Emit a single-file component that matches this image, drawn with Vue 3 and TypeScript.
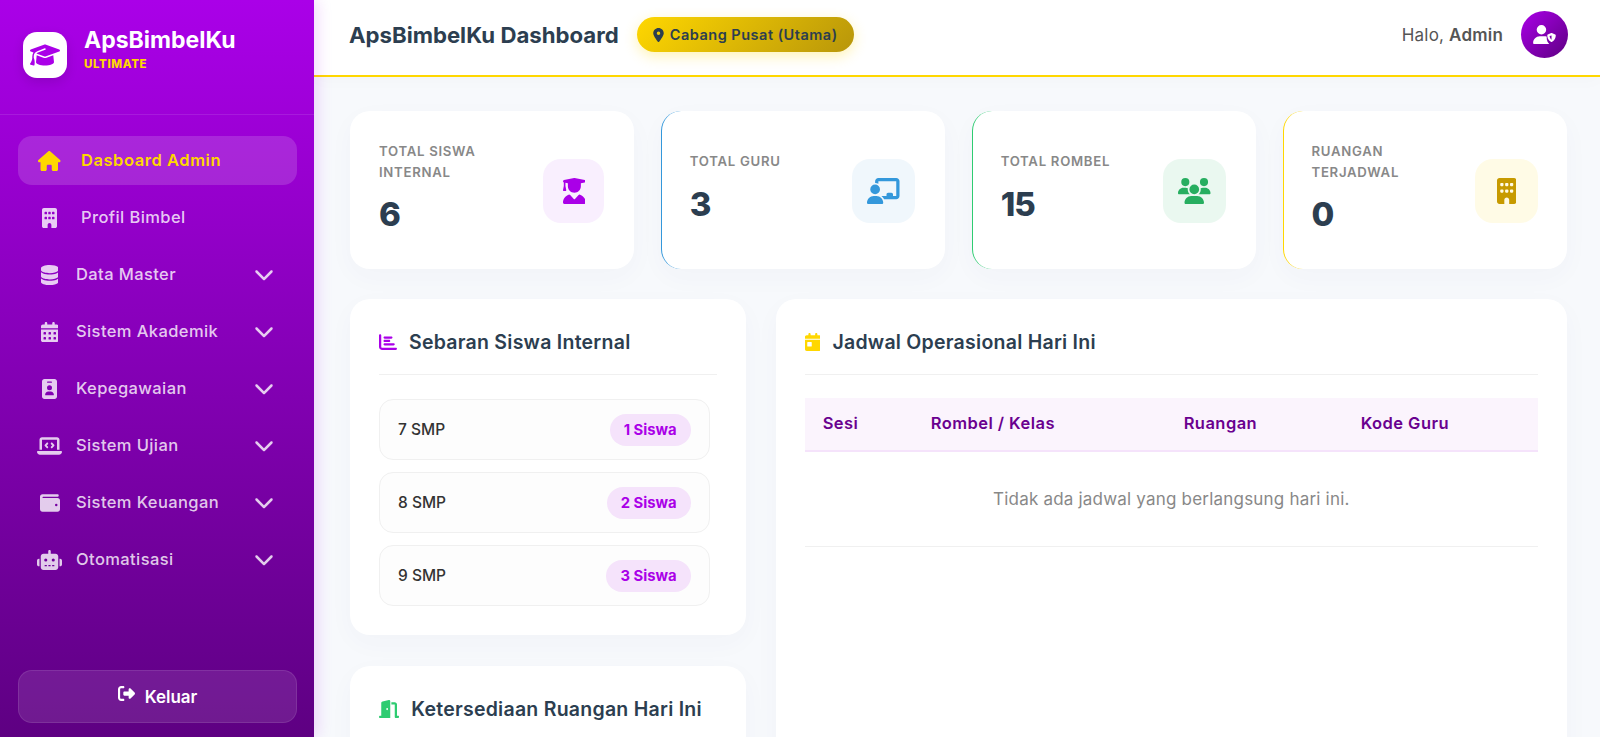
<script setup lang="ts">
interface Glyph {
  box: string
  d: string
}

interface NavItem {
  label: string
  icon: string
  active?: boolean
  dropdown?: boolean
}

interface Stat {
  label: string
  value: number
  icon: string
  tone: string
}

const icons: Record<string, Glyph> = {
  cap: { box: '0 0 640 512', d: 'M320 32c-8.1 0-16.1 1.4-23.7 4.1L15.8 137.4C6.3 140.9 0 149.9 0 160s6.3 19.1 15.8 22.6l57.9 20.9C57.3 229.3 48 259.8 48 291.9v28.1c0 28.4-10.8 57.7-22.3 80.8c-6.5 13-13.9 25.8-22.5 37.6C0 442.7-.9 448.3 .9 453.4s6 8.9 11.2 10.2l64 16c4.2 1.1 8.7 .3 12.4-2s6.3-6.1 7.1-10.4c8.6-42.8 4.3-81.2-2.1-108.7C90.3 344.3 86 329.8 80 316.5V291.9c0-30.2 10.2-58.7 27.9-81.5c12.9-15.5 29.6-28 49.2-35.7l157-61.7c8.2-3.2 17.5 .8 20.7 9s-.8 17.5-9 20.7l-157 61.7c-12.4 4.9-23.3 12.4-32.2 21.6l159.6 57.6c7.6 2.7 15.6 4.1 23.7 4.1s16.1-1.4 23.7-4.1L624.2 182.6c9.5-3.4 15.8-12.5 15.8-22.6s-6.3-19.1-15.8-22.6L343.7 36.1C336.1 33.4 328.1 32 320 32zM128 408c0 35.3 86 72 192 72s192-36.7 192-72L496.7 262.6 354.5 314c-11.1 4-22.8 6-34.5 6s-23.5-2-34.5-6L143.3 262.6 128 408z' },
  house: { box: '0 0 576 512', d: 'M575.8 255.5c0 18-15 32.1-32 32.1h-32l.7 160.2c0 2.7-.2 5.4-.5 8.1V472c0 22.1-17.9 40-40 40H456c-1.1 0-2.2 0-3.3-.1c-1.4 .1-2.8 .1-4.2 .1H416 392c-22.1 0-40-17.9-40-40V448 384c0-17.7-14.3-32-32-32H256c-17.7 0-32 14.3-32 32v64 24c0 22.1-17.9 40-40 40H160 128.1c-1.5 0-3-.1-4.5-.2c-1.2 .1-2.4 .2-3.6 .2H104c-22.1 0-40-17.9-40-40V360c0-.9 0-1.9 .1-2.8V287.6H32c-18 0-32-14-32-32.1c0-9 3-17 10-24L266.4 8c7-7 15-8 22-8s15 2 21 7L564.8 231.5c8 7 12 15 11 24z' },
  building: { box: '0 0 384 512', d: 'M48 0C21.5 0 0 21.5 0 48V464c0 26.5 21.5 48 48 48h96V432c0-26.5 21.5-48 48-48s48 21.5 48 48v80h96c26.5 0 48-21.5 48-48V48c0-26.5-21.5-48-48-48H48zM64 240c0-8.8 7.2-16 16-16h32c8.8 0 16 7.2 16 16v32c0 8.8-7.2 16-16 16H80c-8.8 0-16-7.2-16-16V240zm112-16h32c8.8 0 16 7.2 16 16v32c0 8.8-7.2 16-16 16H176c-8.8 0-16-7.2-16-16V240c0-8.8 7.2-16 16-16zm80 16c0-8.8 7.2-16 16-16h32c8.8 0 16 7.2 16 16v32c0 8.8-7.2 16-16 16H272c-8.8 0-16-7.2-16-16V240zM80 96h32c8.8 0 16 7.2 16 16v32c0 8.8-7.2 16-16 16H80c-8.8 0-16-7.2-16-16V112c0-8.8 7.2-16 16-16zm80 16c0-8.8 7.2-16 16-16h32c8.8 0 16 7.2 16 16v32c0 8.8-7.2 16-16 16H176c-8.8 0-16-7.2-16-16V112zM272 96h32c8.8 0 16 7.2 16 16v32c0 8.8-7.2 16-16 16H272c-8.8 0-16-7.2-16-16V112c0-8.8 7.2-16 16-16z' },
  database: { box: '0 0 448 512', d: 'M448 80v48c0 44.2-100.3 80-224 80S0 172.2 0 128V80C0 35.8 100.3 0 224 0S448 35.8 448 80zM393.2 214.7c20.8-7.4 39.9-16.9 54.8-28.6V288c0 44.2-100.3 80-224 80S0 332.2 0 288V186.1c14.9 11.8 34 21.2 54.8 28.6C99.7 230.7 159.5 240 224 240s124.3-9.3 169.2-25.3zM0 346.1c14.9 11.8 34 21.2 54.8 28.6C99.7 390.7 159.5 400 224 400s124.3-9.3 169.2-25.3c20.8-7.4 39.9-16.9 54.8-28.6V432c0 44.2-100.3 80-224 80S0 476.2 0 432V346.1z' },
  calendar: { box: '0 0 448 512', d: 'M128 0c17.7 0 32 14.3 32 32V64H288V32c0-17.7 14.3-32 32-32s32 14.3 32 32V64h48c26.5 0 48 21.5 48 48v48H0V112C0 85.5 21.5 64 48 64H96V32c0-17.7 14.3-32 32-32zM0 192H448V464c0 26.5-21.5 48-48 48H48c-26.5 0-48-21.5-48-48V192zm64 80v32c0 8.8 7.2 16 16 16h32c8.8 0 16-7.2 16-16V272c0-8.8-7.2-16-16-16H80c-8.8 0-16 7.2-16 16zm128 0v32c0 8.8 7.2 16 16 16h32c8.8 0 16-7.2 16-16V272c0-8.8-7.2-16-16-16H208c-8.8 0-16 7.2-16 16zm144-16c-8.8 0-16 7.2-16 16v32c0 8.8 7.2 16 16 16h32c8.8 0 16-7.2 16-16V272c0-8.8-7.2-16-16-16H336zM64 400v32c0 8.8 7.2 16 16 16h32c8.8 0 16-7.2 16-16V400c0-8.8-7.2-16-16-16H80c-8.8 0-16 7.2-16 16zm144-16c-8.8 0-16 7.2-16 16v32c0 8.8 7.2 16 16 16h32c8.8 0 16-7.2 16-16V400c0-8.8-7.2-16-16-16H208zm112 16v32c0 8.8 7.2 16 16 16h32c8.8 0 16-7.2 16-16V400c0-8.8-7.2-16-16-16H336c-8.8 0-16 7.2-16 16z' },
  badge: { box: '0 0 384 512', d: 'M64 0C28.7 0 0 28.7 0 64V448c0 35.3 28.7 64 64 64H320c35.3 0 64-28.7 64-64V64c0-35.3-28.7-64-64-64H64zm96 320h64c44.2 0 80 35.8 80 80c0 8.8-7.2 16-16 16H96c-8.8 0-16-7.2-16-16c0-44.2 35.8-80 80-80zm-32-96a64 64 0 1 1 128 0 64 64 0 1 1 -128 0zM144 64h96c8.8 0 16 7.2 16 16s-7.2 16-16 16H144c-8.8 0-16-7.2-16-16s7.2-16 16-16z' },
  laptop: { box: '0 0 640 512', d: 'M64 96c0-35.3 28.7-64 64-64H512c35.3 0 64 28.7 64 64V352H512V96H128V352H64V96zM0 403.2C0 392.6 8.6 384 19.2 384H620.8c10.6 0 19.2 8.6 19.2 19.2c0 42.4-34.4 76.8-76.8 76.8H76.8C34.4 480 0 445.6 0 403.2zM281 209l-31 31 31 31c9.4 9.4 9.4 24.6 0 33.9s-24.6 9.4-33.9 0l-48-48c-9.4-9.4-9.4-24.6 0-33.9l48-48c9.4-9.4 24.6-9.4 33.9 0s9.4 24.6 0 33.9zM393 175l48 48c9.4 9.4 9.4 24.6 0 33.9l-48 48c-9.4 9.4-24.6 9.4-33.9 0s-9.4-24.6 0-33.9l31-31-31-31c-9.4-9.4-9.4-24.6 0-33.9s24.6-9.4 33.9 0z' },
  wallet: { box: '0 0 512 512', d: 'M64 32C28.7 32 0 60.7 0 96V416c0 35.3 28.7 64 64 64H448c35.3 0 64-28.7 64-64V192c0-35.3-28.7-64-64-64H80c-8.8 0-16-7.2-16-16s7.2-16 16-16H448c17.7 0 32-14.3 32-32s-14.3-32-32-32H64zM416 272a32 32 0 1 1 0 64 32 32 0 1 1 0-64z' },
  robot: { box: '0 0 640 512', d: 'M320 0c17.7 0 32 14.3 32 32V96H472c39.8 0 72 32.2 72 72V440c0 39.8-32.2 72-72 72H168c-39.8 0-72-32.2-72-72V168c0-39.8 32.2-72 72-72H288V32c0-17.7 14.3-32 32-32zM208 384c-8.8 0-16 7.2-16 16s7.2 16 16 16h32c8.8 0 16-7.2 16-16s-7.2-16-16-16H208zm96 0c-8.8 0-16 7.2-16 16s7.2 16 16 16h32c8.8 0 16-7.2 16-16s-7.2-16-16-16H304zm96 0c-8.8 0-16 7.2-16 16s7.2 16 16 16h32c8.8 0 16-7.2 16-16s-7.2-16-16-16H400zM264 256a40 40 0 1 0 -80 0 40 40 0 1 0 80 0zm152 40a40 40 0 1 0 0-80 40 40 0 1 0 0 80zM48 224H64V416H48c-26.5 0-48-21.5-48-48V272c0-26.5 21.5-48 48-48zm544 0c26.5 0 48 21.5 48 48v96c0 26.5-21.5 48-48 48H576V224h16z' },
  chevron: { box: '0 0 512 512', d: 'M233.4 406.6c12.5 12.5 32.8 12.5 45.3 0l192-192c12.5-12.5 12.5-32.8 0-45.3s-32.8-12.5-45.3 0L256 338.7 86.6 169.4c-12.5-12.5-32.8-12.5-45.3 0s-12.5 32.8 0 45.3l192 192z' },
  logout: { box: '0 0 512 512', d: 'M377.9 105.9L500.7 228.7c7.2 7.2 11.3 17.1 11.3 27.3s-4.1 20.1-11.3 27.3L377.9 406.1c-6.4 6.4-15 9.9-24 9.9c-18.7 0-33.9-15.2-33.9-33.9l0-62.1-128 0c-17.7 0-32-14.3-32-32l0-64c0-17.7 14.3-32 32-32l128 0 0-62.1c0-18.7 15.2-33.9 33.9-33.9c9 0 17.6 3.6 24 9.9zM160 96L96 96c-17.7 0-32 14.3-32 32l0 256c0 17.7 14.3 32 32 32l64 0c17.7 0 32 14.3 32 32s-14.3 32-32 32l-64 0c-53 0-96-43-96-96L0 128C0 75 43 32 96 32l64 0c17.7 0 32 14.3 32 32s-14.3 32-32 32z' },
  pin: { box: '0 0 384 512', d: 'M215.7 499.2C267 435 384 279.4 384 192C384 86 298 0 192 0S0 86 0 192c0 87.4 117 243 168.3 307.2c12.3 15.3 35.1 15.3 47.4 0zM192 128a64 64 0 1 1 0 128 64 64 0 1 1 0-128z' },
  userShield: { box: '0 0 640 512', d: 'M224 256A128 128 0 1 0 224 0a128 128 0 1 0 0 256zm-45.7 48C79.8 304 0 383.800 0 482.300C0 498.700 13.300 512 29.700 512H418.300c5.300 0 10.300-1.400 14.600-3.800C395 470 366 414 366 347c0-11 .9-21.400 2.600-31.200C348.500 308.900 326.900 304 304 304H178.300zM505 217c-6-2.400-12.700-2.400-18.700 0L396 253c-9 3.600-15 12-15 21.700c0 52 21 138 104 182c6.600 3.500 14.400 3.500 21 0c83-44 104-130 104-182c0-9.700-6-18.100-15-21.700L505 217zM496 280v115c-30-20-49-60-52-97l52-18z' },
  student: { box: '0 0 448 512', d: 'M219.3 .5c3.1-.6 6.3-.6 9.4 0l200 40C439.9 42.7 448 52.6 448 64s-8.1 21.3-19.3 23.5L352 102.9V160c0 70.7-57.3 128-128 128s-128-57.3-128-128V102.9L48 93.3v65.1l15.7 78.4c.9 4.7-.3 9.6-3.3 13.3s-7.6 5.9-12.4 5.9H16c-4.800 0-9.300-2.100-12.400-5.900s-4.300-8.600-3.300-13.300L16 158.400V86.600C6.500 83.300 0 74.300 0 64C0 52.600 8.100 42.700 19.300 40.500l200-40zM111.900 327.700c10.500-3.400 21.800 .4 29.400 8.500l71 75.500c6.300 6.700 17 6.700 23.300 0l71-75.500c7.600-8.100 18.900-11.900 29.400-8.500C401 348.600 448 409.400 448 481.300c0 17-13.800 30.700-30.700 30.700H30.700C13.800 512 0 498.200 0 481.300c0-71.900 47-132.700 111.900-153.600z' },
  teacher: { box: '0 0 640 512', d: 'M160 64c0-35.300 28.700-64 64-64H576c35.300 0 64 28.700 64 64V352c0 35.300-28.700 64-64 64H336.800c-11.800-25.500-29.900-47.500-52.400-64H384V320c0-17.700 14.300-32 32-32h64c17.700 0 32 14.300 32 32v32h64V64L224 64v49.100C205.200 102.200 183.300 96 160 96V64zm0 64a96 96 0 1 1 0 192 96 96 0 1 1 0-192zM133.300 352h53.300C260.300 352 320 411.700 320 485.300c0 14.700-11.900 26.700-26.700 26.700H26.700C11.900 512 0 500.100 0 485.300C0 411.700 59.700 352 133.300 352z' },
  users: { box: '0 0 640 512', d: 'M144 0a80 80 0 1 1 0 160A80 80 0 1 1 144 0zM512 0a80 80 0 1 1 0 160A80 80 0 1 1 512 0zM0 298.700C0 239.800 47.800 192 106.700 192h42.700c15.900 0 31 3.500 44.600 9.700c-1.300 7.200-1.900 14.700-1.900 22.300c0 38.200 16.800 72.500 43.300 96c-.2 0-.4 0-.7 0H21.300C9.600 320 0 310.400 0 298.700zM405.300 320c-.2 0-.4 0-.7 0c26.600-23.500 43.300-57.800 43.300-96c0-7.600-.7-15-1.900-22.300c13.600-6.300 28.700-9.700 44.600-9.700h42.700C592.200 192 640 239.800 640 298.700c0 11.800-9.600 21.300-21.300 21.300H405.300zM224 224a96 96 0 1 1 192 0 96 96 0 1 1 -192 0zM128 485.300C128 411.700 187.700 352 261.300 352H378.700C452.300 352 512 411.700 512 485.300c0 14.700-11.900 26.700-26.700 26.700H154.700c-14.700 0-26.700-11.900-26.700-26.700z' },
  chart: { box: '0 0 512 512', d: 'M32 32c17.700 0 32 14.300 32 32V400c0 8.800 7.200 16 16 16H480c17.700 0 32 14.300 32 32s-14.300 32-32 32H80c-44.200 0-80-35.800-80-80V64C0 46.300 14.300 32 32 32zm96 96c0-17.700 14.300-32 32-32l192 0c17.700 0 32 14.300 32 32s-14.300 32-32 32l-192 0c-17.700 0-32-14.300-32-32zm32 64H288c17.700 0 32 14.300 32 32s-14.300 32-32 32H160c-17.700 0-32-14.300-32-32s14.300-32 32-32zm0 96H416c17.700 0 32 14.300 32 32s-14.300 32-32 32H160c-17.700 0-32-14.300-32-32s14.300-32 32-32z' },
  door: { box: '0 0 576 512', d: 'M320 32c0-9.900-4.500-19.200-12.300-25.200S289.800-1.400 280.200 1l-179.900 45C79 51.300 64 70.500 64 92.500V448H32c-17.700 0-32 14.300-32 32s14.300 32 32 32H96 288h32V480 32zM256 256c0 17.700-10.700 32-24 32s-24-14.300-24-32s10.700-32 24-32s24 14.300 24 32zm96-128h96V480c0 17.700 14.300 32 32 32h64c17.700 0 32-14.300 32-32s-14.300-32-32-32H512V128c0-35.300-28.700-64-64-64H352v64z' },
  calendarDay: { box: '0 0 448 512', d: 'M128 0c17.700 0 32 14.300 32 32V64H288V32c0-17.700 14.300-32 32-32s32 14.300 32 32V64h48c26.500 0 48 21.500 48 48v48H0V112C0 85.500 21.500 64 48 64H96V32c0-17.700 14.300-32 32-32zM0 192H448V464c0 26.500-21.500 48-48 48H48c-26.500 0-48-21.500-48-48V192zm80 64c-8.800 0-16 7.200-16 16v96c0 8.800 7.200 16 16 16h96c8.800 0 16-7.200 16-16V272c0-8.800-7.200-16-16-16H80z' }
}

const navItems: NavItem[] = [
  { label: 'Dasboard Admin', icon: 'house', active: true },
  { label: 'Profil Bimbel', icon: 'building' },
  { label: 'Data Master', icon: 'database', dropdown: true },
  { label: 'Sistem Akademik', icon: 'calendar', dropdown: true },
  { label: 'Kepegawaian', icon: 'badge', dropdown: true },
  { label: 'Sistem Ujian', icon: 'laptop', dropdown: true },
  { label: 'Sistem Keuangan', icon: 'wallet', dropdown: true },
  { label: 'Otomatisasi', icon: 'robot', dropdown: true }
]

const stats: Stat[] = [
  { label: 'Total Siswa Internal', value: 6, icon: 'student', tone: 'purple' },
  { label: 'Total Guru', value: 3, icon: 'teacher', tone: 'blue' },
  { label: 'Total Rombel', value: 15, icon: 'users', tone: 'green' },
  { label: 'Ruangan Terjadwal', value: 0, icon: 'building', tone: 'gold' }
]

const sebaran = [
  { kelas: '7 SMP', jumlah: '1 Siswa' },
  { kelas: '8 SMP', jumlah: '2 Siswa' },
  { kelas: '9 SMP', jumlah: '3 Siswa' }
]

const kolom = ['Sesi', 'Rombel / Kelas', 'Ruangan', 'Kode Guru']
</script>

<template>
  <div class="layout">
    <aside class="sidebar">
      <div class="brand">
        <div class="brand-logo">
          <svg class="brand-cap" :viewBox="icons.cap.box"><path :d="icons.cap.d" /></svg>
        </div>
        <div>
          <div class="brand-name">ApsBimbelKu</div>
          <div class="brand-tag">ULTIMATE</div>
        </div>
      </div>

      <nav class="nav">
        <a
          v-for="item in navItems"
          :key="item.label"
          :class="['nav-link', { 'nav-link--active': item.active, 'nav-link--drop': item.dropdown }]"
        >
          <span class="nav-icon">
            <svg :viewBox="icons[item.icon].box"><path :d="icons[item.icon].d" /></svg>
          </span>
          <span class="nav-label">{{ item.label }}</span>
          <svg v-if="item.dropdown" class="nav-chevron" :viewBox="icons.chevron.box"><path :d="icons.chevron.d" /></svg>
        </a>
      </nav>

      <button class="logout" type="button">
        <svg class="logout-icon" :viewBox="icons.logout.box"><path :d="icons.logout.d" /></svg>
        <span>Keluar</span>
      </button>
    </aside>

    <div class="main">
      <header class="topbar">
        <h1 class="topbar-title">ApsBimbelKu Dashboard</h1>
        <div class="branch">
          <svg class="branch-icon" :viewBox="icons.pin.box"><path :d="icons.pin.d" /></svg>
          <span>Cabang Pusat (Utama)</span>
        </div>
        <div class="user">
          <span class="user-hello">Halo, <strong>Admin</strong></span>
          <div class="user-avatar">
            <svg :viewBox="icons.userShield.box"><path :d="icons.userShield.d" /></svg>
          </div>
        </div>
      </header>

      <main class="content">
        <section class="stats">
          <div v-for="stat in stats" :key="stat.label" :class="['stat', `stat--${stat.tone}`]">
            <div class="stat-text">
              <div class="stat-label">{{ stat.label }}</div>
              <div class="stat-value">{{ stat.value }}</div>
            </div>
            <div class="stat-icon">
              <svg :viewBox="icons[stat.icon].box"><path :d="icons[stat.icon].d" /></svg>
            </div>
          </div>
        </section>

        <section class="columns">
          <div class="col-left">
            <div class="panel">
              <h2 class="panel-title">
                <svg class="panel-icon panel-icon--purple" :viewBox="icons.chart.box"><path :d="icons.chart.d" /></svg>
                Sebaran Siswa Internal
              </h2>
              <div class="kelas-list">
                <div v-for="row in sebaran" :key="row.kelas" class="kelas-row">
                  <span class="kelas-name">{{ row.kelas }}</span>
                  <span class="kelas-pill">{{ row.jumlah }}</span>
                </div>
              </div>
            </div>

            <div class="panel panel--room">
              <h2 class="panel-title">
                <svg class="panel-icon panel-icon--green" :viewBox="icons.door.box"><path :d="icons.door.d" /></svg>
                Ketersediaan Ruangan Hari Ini
              </h2>
            </div>
          </div>

          <div class="panel panel--jadwal">
            <h2 class="panel-title">
              <svg class="panel-icon panel-icon--gold" :viewBox="icons.calendarDay.box"><path :d="icons.calendarDay.d" /></svg>
              Jadwal Operasional Hari Ini
            </h2>
            <table class="jadwal">
              <thead>
                <tr>
                  <th v-for="k in kolom" :key="k">{{ k }}</th>
                </tr>
              </thead>
              <tbody>
                <tr>
                  <td colspan="4">Tidak ada jadwal yang berlangsung hari ini.</td>
                </tr>
              </tbody>
            </table>
          </div>
        </section>
      </main>
    </div>
  </div>
</template>

<style>
html,
body {
  margin: 0;
  height: 100%;
  overflow: hidden;
}
</style>

<style scoped>
.layout {
  display: flex;
  height: 737px;
  overflow: hidden;
  font-family: Inter, "Open Sans", sans-serif;
  background: #f7f9fc;
  color: #333;
}

svg {
  display: block;
  fill: currentColor;
}

/* sidebar */
.sidebar {
  position: relative;
  z-index: 2;
  flex: 0 0 314px;
  display: flex;
  flex-direction: column;
  background: linear-gradient(180deg, #aa00e8 0%, #5e0082 100%);
  box-shadow: 4px 0 14px rgba(170, 0, 232, 0.14);
}

.brand {
  height: 115px;
  box-sizing: border-box;
  padding: 27px 23px 0;
  display: flex;
  gap: 17px;
  border-bottom: 1px solid rgba(255, 255, 255, 0.1);
}

.brand-logo {
  width: 44px;
  height: 46px;
  margin-top: 5px;
  border-radius: 14px;
  background: #fff;
  color: #aa00e8;
  display: flex;
  align-items: center;
  justify-content: center;
  box-shadow: 0 4px 12px rgba(0, 0, 0, 0.12);
}

.brand-cap {
  width: 30px;
  height: 24px;
}

.brand-name {
  font-size: 23px;
  line-height: 26px;
  font-weight: 700;
  color: #fff;
}

.brand-tag {
  margin-top: 4px;
  font-size: 11.5px;
  line-height: 14px;
  font-weight: 800;
  letter-spacing: 0.6px;
  color: #ffd700;
}

.nav {
  padding: 21px 17px 0 18px;
  display: flex;
  flex-direction: column;
  gap: 8px;
}

.nav-link {
  height: 49px;
  box-sizing: border-box;
  padding: 0 18px 0 19px;
  display: flex;
  align-items: center;
  gap: 19px;
  border-radius: 14px;
  font-size: 16.5px;
  font-weight: 500;
  letter-spacing: 0.4px;
  color: rgba(255, 255, 255, 0.8);
}

.nav-link--drop {
  gap: 14px;
}

.nav-link--active {
  background: rgba(255, 255, 255, 0.15);
  color: #ffd700;
  font-weight: 600;
  letter-spacing: 0.55px;
}

.nav-label {
  margin-top: -2px;
}

.nav-icon {
  width: 25px;
  height: 20px;
  display: flex;
  justify-content: center;
}

.nav-icon svg {
  height: 20px;
}

.nav-chevron {
  width: 20px;
  height: 20px;
  margin-left: auto;
  margin-top: -2px;
  margin-right: 5px;
}

.logout {
  margin: auto 17px 14px 18px;
  height: 53px;
  display: flex;
  align-items: center;
  justify-content: center;
  gap: 10px;
  border: 1px solid rgba(255, 255, 255, 0.1);
  border-radius: 14px;
  background: rgba(255, 255, 255, 0.1);
  font-family: inherit;
  font-size: 17px;
  font-weight: 600;
  color: #fff;
}

.logout-icon {
  width: 17px;
  height: 17px;
  margin-top: -6px;
}

/* topbar */
.main {
  flex: 1;
  min-width: 0;
  display: flex;
  flex-direction: column;
}

.topbar {
  height: 77px;
  flex: 0 0 77px;
  box-sizing: border-box;
  padding: 0 32px 6px 35px;
  display: flex;
  align-items: center;
  background: #fff;
  border-bottom: 2px solid #ffd700;
  box-shadow: 0 4px 16px rgba(0, 0, 0, 0.02);
}

.topbar-title {
  margin: 0;
  font-size: 22.2px;
  font-weight: 700;
  color: #2c3e50;
}

.branch {
  margin-left: 18px;
  height: 35px;
  padding: 0 16px;
  display: flex;
  align-items: center;
  gap: 6px;
  border-radius: 18px;
  background: linear-gradient(135deg, #ffd700, #b8960a);
  box-shadow: 0 4px 14px rgba(255, 215, 0, 0.3);
  font-size: 14.5px;
  font-weight: 600;
  letter-spacing: 0.5px;
  color: #2c3e50;
}

.branch-icon {
  width: 11px;
  height: 14px;
}

.user {
  margin-left: auto;
  display: flex;
  align-items: center;
  gap: 18px;
}

.user-hello {
  font-size: 17px;
  letter-spacing: 0.2px;
  color: #555;
}

.user-hello strong {
  font-weight: 600;
}

.user-avatar {
  width: 47px;
  height: 47px;
  border-radius: 50%;
  background: linear-gradient(135deg, #aa00e8, #5e0082);
  color: #fff;
  display: flex;
  align-items: center;
  justify-content: center;
}

.user-avatar svg {
  width: 24px;
  height: 19px;
}

/* content */
.content {
  flex: 1;
  min-height: 0;
  padding: 34px 33px 0 36px;
  overflow: hidden;
}

.stats {
  display: grid;
  grid-template-columns: repeat(4, 1fr);
  gap: 26.4px;
}

.stat {
  height: 158px;
  box-sizing: border-box;
  padding: 0 30px 0 28px;
  display: flex;
  align-items: center;
  justify-content: space-between;
  background: #fff;
  border-radius: 20px;
  box-shadow: 0 8px 26px rgba(60, 60, 120, 0.03);
}

.stat-text {
  padding-bottom: 5.5px;
}

.stat-label {
  max-width: 120px;
  font-size: 13.2px;
  line-height: 21px;
  font-weight: 600;
  letter-spacing: 0.7px;
  text-transform: uppercase;
  color: #888;
}

.stat-value {
  margin-top: 11.5px;
  font-size: 33px;
  line-height: 40px;
  font-weight: 800;
  letter-spacing: -1px;
  color: #2c3e50;
}

.stat-icon {
  flex: 0 0 63.5px;
  width: 63.5px;
  height: 64px;
  margin-top: 1px;
  border-radius: 18px;
  display: flex;
  align-items: center;
  justify-content: center;
}

.stat-icon svg {
  height: 26px;
}

.stat--purple {
  padding-left: 29px;
}

.stat--purple .stat-icon {
  flex-basis: 61px;
  width: 61px;
  background: #f9effe;
  color: #aa00e8;
}

.stat--blue {
  border-left: 1px solid #3498db;
}

.stat--blue .stat-icon {
  background: #f0f7fc;
  color: #3498db;
}

.stat--green {
  border-left: 1px solid #2ecc71;
}

.stat--green .stat-icon {
  background: #eaf8f0;
  color: #27ae60;
}

.stat--gold {
  padding-right: 29px;
  border-left: 1px solid #ffd700;
}

.stat--gold .stat-icon {
  background: #fffbe6;
  color: #c79a00;
}

.columns {
  margin-top: 30px;
  display: grid;
  grid-template-columns: 1fr 2fr;
  gap: 30px;
}

.col-left {
  display: flex;
  flex-direction: column;
  gap: 31px;
}

.panel {
  padding: 29px;
  background: #fff;
  border-radius: 20px;
  box-shadow: 0 8px 26px rgba(60, 60, 120, 0.03);
}

.panel--room {
  min-height: 260px;
  box-sizing: border-box;
}

.panel-title {
  margin: 0 0 23px;
  height: 47px;
  box-sizing: border-box;
  padding-bottom: 18px;
  display: flex;
  align-items: center;
  gap: 12px;
  border-bottom: 1px solid #f0f0f0;
  font-size: 19.5px;
  font-weight: 600;
  letter-spacing: 0.25px;
  color: #2c3e50;
}

.panel-icon {
  height: 18px;
  flex: none;
}

.panel-icon--purple {
  color: #aa00e8;
}

.panel-icon--green {
  color: #2ecc71;
}

.panel-icon--gold {
  color: #ffd700;
}

.kelas-list {
  display: flex;
  flex-direction: column;
  gap: 12px;
  margin: 24px 7px 0 0;
}

.kelas-row {
  height: 61px;
  box-sizing: border-box;
  padding: 0 18px;
  display: flex;
  align-items: center;
  justify-content: space-between;
  background: #fdfdfd;
  border: 1px solid #f0f0f0;
  border-radius: 14px;
}

.kelas-name {
  font-size: 15.5px;
  font-weight: 500;
  color: #333;
}

.kelas-pill {
  padding: 0 14px;
  height: 32px;
  display: flex;
  align-items: center;
  border-radius: 16px;
  background: #f5e3fb;
  font-size: 14.8px;
  font-weight: 700;
  color: #aa00e8;
}

.jadwal {
  width: 100%;
  border-collapse: collapse;
  table-layout: fixed;
}

.jadwal th {
  height: 53px;
  padding: 0 18px 2px;
  box-sizing: border-box;
  text-align: left;
  background: #fbf4fd;
  border-bottom: 2px solid #f5e3fb;
  font-size: 16.5px;
  font-weight: 600;
  letter-spacing: 0.45px;
  color: #6a008f;
}

.jadwal th:nth-child(1) {
  width: 108px;
}

.jadwal th:nth-child(2) {
  width: 253px;
}

.jadwal th:nth-child(3) {
  width: 177px;
}

.jadwal td {
  height: 95px;
  padding-bottom: 1px;
  box-sizing: border-box;
  text-align: center;
  border-bottom: 1px solid #f0f0f0;
  font-size: 17px;
  letter-spacing: 0.2px;
  color: #888;
}
</style>
